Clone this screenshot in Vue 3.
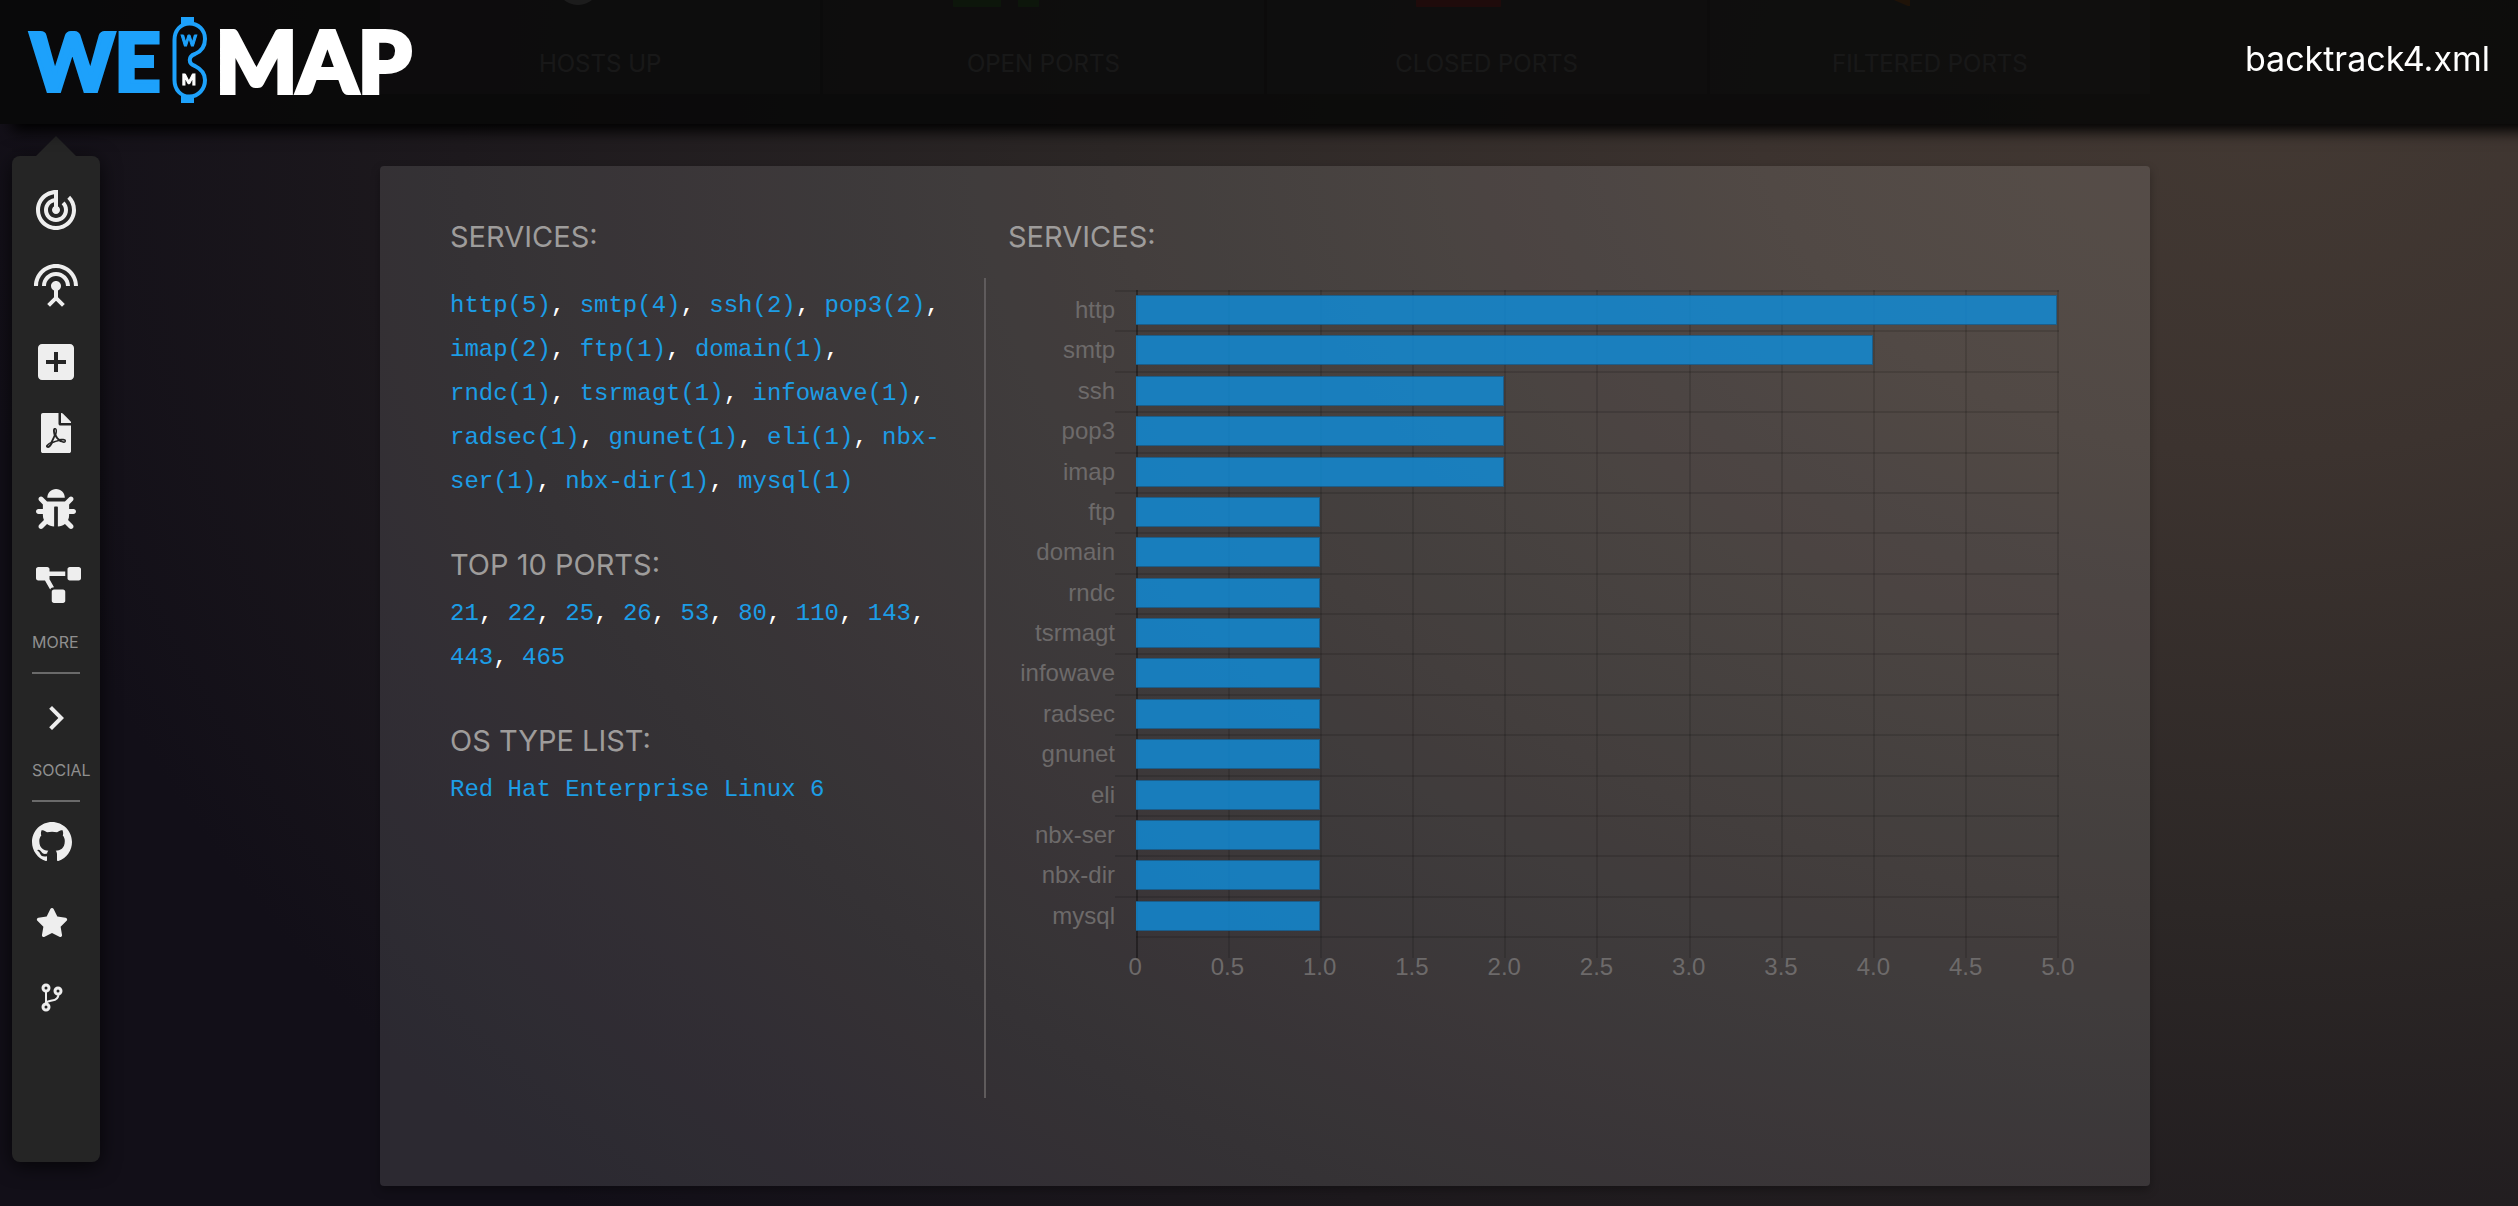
<script setup>
const tiles = [
  { label: 'HOSTS UP', kind: 'hosts' },
  { label: 'OPEN PORTS', kind: 'open' },
  { label: 'CLOSED PORTS', kind: 'closed' },
  { label: 'FILTERED PORTS', kind: 'filtered' },
]

const services = [
  { name: 'http', count: 5 },
  { name: 'smtp', count: 4 },
  { name: 'ssh', count: 2 },
  { name: 'pop3', count: 2 },
  { name: 'imap', count: 2 },
  { name: 'ftp', count: 1 },
  { name: 'domain', count: 1 },
  { name: 'rndc', count: 1 },
  { name: 'tsrmagt', count: 1 },
  { name: 'infowave', count: 1 },
  { name: 'radsec', count: 1 },
  { name: 'gnunet', count: 1 },
  { name: 'eli', count: 1 },
  { name: 'nbx-ser', count: 1 },
  { name: 'nbx-dir', count: 1 },
  { name: 'mysql', count: 1 },
]

const ports = [21, 22, 25, 26, 53, 80, 110, 143, 443, 465]

const axisMax = 5
const ticks = ['0', '0.5', '1.0', '1.5', '2.0', '2.5', '3.0', '3.5', '4.0', '4.5', '5.0']
</script>

<template>
  <div class="page">
    <header class="topbar">
      <a class="logo" href="#" aria-label="WebMap home">
        <span class="logo-we">WE</span>
        <svg class="logo-b" viewBox="0 0 36 86" width="36" height="86" aria-hidden="true">
          <rect x="9" y="0" width="13" height="8" fill="#1da1fb" />
          <rect x="9" y="78" width="13" height="8" fill="#1da1fb" />
          <path
            d="M2.5 23C2.5 13 9 6.500 17.500 6.500C26.500 6.500 33 13 33 22C33 29 29 34.500 23 37C16 39.500 16 46.500 23 49C29 52 33 57 33 63C33 72 26.500 79.500 17.500 79.500C9 79.500 2.500 73 2.500 63Z"
            fill="none" stroke="#1da1fb" stroke-width="4" />
          <text x="17" y="28.500" fill="#1da1fb" stroke="#1da1fb" class="logo-mini">W</text>
          <text x="17" y="68" fill="#fff" stroke="#fff" class="logo-mini">M</text>
        </svg>
        <span class="logo-map">MAP</span>
      </a>
      <span class="filename">backtrack4.xml</span>
    </header>

    <nav class="sidebar" aria-label="Main">
      <div class="group">
        <a href="#" aria-label="Scan">
          <svg viewBox="0 0 24 24" width="48" height="48"><path d="M19.07 4.93l-1.41 1.41C19.1 7.79 20 9.79 20 12c0 4.42-3.58 8-8 8s-8-3.58-8-8c0-4.08 3.05-7.44 7-7.93v2.02C8.16 6.57 6 9.03 6 12c0 3.31 2.69 6 6 6s6-2.69 6-6c0-1.66-.67-3.16-1.76-4.24l-1.41 1.41C15.55 9.9 16 10.900 16 12c0 2.210-1.790 4-4 4s-4-1.790-4-4c0-1.860 1.280-3.410 3-3.860v2.140c-.6.35-1 .98-1 1.720 0 1.100.9 2 2 2s2-.9 2-2c0-.74-.4-1.380-1-1.720V2h-1C6.480 2 2 6.480 2 12s4.480 10 10 10 10-4.480 10-10c0-2.760-1.120-5.260-2.930-7.070z" /></svg>
        </a>
        <a href="#" aria-label="Network">
          <svg viewBox="0 0 24 24" width="48" height="48"><path d="M12 5c-3.87 0-7 3.13-7 7h2c0-2.76 2.24-5 5-5s5 2.24 5 5h2c0-3.87-3.13-7-7-7zm1 9.29c.88-.39 1.5-1.26 1.5-2.29 0-1.38-1.12-2.5-2.5-2.5S9.5 10.62 9.5 12c0 1.02.62 1.9 1.5 2.29v3.3L7.59 21 9 22.41l3-3 3 3L16.41 21 13 17.59v-3.3zM12 1C5.93 1 1 5.93 1 12h2c0-4.97 4.03-9 9-9s9 4.03 9 9h2c0-6.07-4.93-11-11-11z" /></svg>
        </a>
        <a href="#" aria-label="New scan">
          <svg viewBox="0 0 24 24" width="48" height="48"><path d="M19 3H5c-1.11 0-2 .9-2 2v14c0 1.1.89 2 2 2h14c1.1 0 2-.9 2-2V5c0-1.1-.9-2-2-2zm-2 10h-4v4h-2v-4H7v-2h4V7h2v4h4v2z" /></svg>
        </a>
      </div>
      <div class="group group-tools">
        <a href="#" aria-label="PDF report">
          <svg viewBox="0 0 384 512" width="40" height="40"><path d="M181.9 256.1c-5-16-4.9-46.9-2-46.9 8.4 0 7.6 36.9 2 46.9zm-1.7 47.2c-7.7 20.2-17.3 43.3-28.4 62.7 18.3-7 39-17.2 62.9-21.9-12.7-9.6-24.9-23.4-34.5-40.8zM86.1 428.1c0 .8 13.2-5.4 34.9-40.2-6.7 6.3-29.1 24.5-34.9 40.2zM248 160h136v328c0 13.3-10.7 24-24 24H24c-13.3 0-24-10.7-24-24V24C0 10.7 10.7 0 24 0h200v136c0 13.2 10.8 24 24 24zm-8 171.8c-20-12.2-33.3-29-42.7-53.8 4.5-18.5 11.6-46.6 6.2-64.2-4.7-29.4-42.4-26.5-47.8-6.8-5 18.3-.4 44.1 8.1 77-11.6 27.6-28.7 64.6-40.8 85.8-.1 0-.1.1-.2.1-27.1 13.9-73.6 44.5-54.5 68 5.6 6.9 16 10 21.5 10 17.9 0 35.7-18 61.1-61.8 25.8-8.5 54.1-19.1 79-23.2 21.7 11.8 47.1 19.5 64 19.5 29.2 0 31.2-32 19.7-43.4-13.9-13.6-54.3-9.7-73.6-7.2zM377 105L279 7c-4.5-4.5-10.6-7-17-7h-6v128h128v-6.1c0-6.3-2.5-12.4-7-16.900zm-74.100 255.300c4.100-2.700-2.500-11.900-42.800-9 37.100 15.800 42.800 9 42.800 9z" /></svg>
        </a>
        <a href="#" aria-label="CVE check">
          <svg viewBox="0 0 512 512" width="40" height="40"><path d="M511.988 288.9c-.478 17.43-15.217 31.1-32.653 31.1H424v16c0 21.864-4.882 42.584-13.6 61.145l60.228 60.228c12.496 12.497 12.496 32.758 0 45.255-12.498 12.497-32.759 12.496-45.256 0l-54.736-54.736C345.886 467.965 314.351 480 280 480V236c0-6.627-5.373-12-12-12h-24c-6.627 0-12 5.373-12 12v244c-34.351 0-65.886-12.035-90.636-32.108l-54.736 54.736c-12.498 12.497-32.759 12.496-45.256 0-12.496-12.497-12.496-32.758 0-45.255l60.228-60.228C92.882 378.584 88 357.864 88 336v-16H32.666C15.230 320 .491 306.330.013 288.900-.484 270.816 14.028 256 32 256h56v-58.745l-46.628-46.628c-12.496-12.497-12.496-32.758 0-45.255 12.498-12.497 32.758-12.497 45.256 0L141.255 160h229.489l54.627-54.627c12.498-12.497 32.758-12.497 45.256 0 12.496 12.497 12.496 32.758 0 45.255L424 197.255V256h56c17.972 0 32.484 14.816 31.988 32.900zM257 0c-61.856 0-112 50.144-112 112h224C369 50.144 318.856 0 257 0z" /></svg>
        </a>
        <a href="#" aria-label="Network diagram">
          <svg viewBox="0 0 640 512" width="45" height="40"><path d="M384 320H256c-17.670 0-32 14.330-32 32v128c0 17.670 14.330 32 32 32h128c17.670 0 32-14.330 32-32V352c0-17.670-14.330-32-32-32zM192 32c0-17.670-14.330-32-32-32H32C14.330 0 0 14.330 0 32v128c0 17.670 14.330 32 32 32h95.720l73.160 128.040C211.980 300.980 232.400 288 256 288h.28L192 175.510V128h224V64H192V32zM608 0H480c-17.670 0-32 14.330-32 32v128c0 17.670 14.330 32 32 32h128c17.670 0 32-14.330 32-32V32c0-17.670-14.330-32-32-32z" /></svg>
        </a>
      </div>
      <p class="caption">MORE</p>
      <a class="more-link" href="#" aria-label="Expand">
        <svg viewBox="0 0 24 24" width="48" height="48"><path d="M10 6L8.590 7.410 13.170 12l-4.580 4.590L10 18l6-6z" /></svg>
      </a>
      <p class="caption">SOCIAL</p>
      <div class="group group-social">
        <a href="#" aria-label="GitHub">
          <svg viewBox="0 0 16 16" width="40" height="40"><path d="M8 0C3.58 0 0 3.58 0 8c0 3.54 2.29 6.53 5.47 7.59.4.07.55-.17.55-.38 0-.19-.01-.82-.01-1.49-2.01.37-2.53-.49-2.69-.94-.09-.23-.48-.94-.82-1.13-.28-.15-.68-.52-.01-.53.63-.01 1.08.58 1.23.82.72 1.21 1.87.87 2.33.66.07-.52.28-.87.51-1.07-1.78-.2-3.64-.89-3.64-3.95 0-.87.31-1.59.82-2.15-.08-.2-.36-1.02.08-2.12 0 0 .67-.21 2.2.82.64-.18 1.32-.27 2-.27s1.36.09 2 .27c1.53-1.04 2.2-.82 2.2-.82.44 1.1.16 1.92.08 2.12.51.56.82 1.27.82 2.15 0 3.07-1.87 3.75-3.65 3.95.29.25.54.73.54 1.48 0 1.07-.01 1.93-.01 2.2 0 .21.15.46.55.38A8.01 8.01 0 0 0 16 8c0-4.42-3.58-8-8-8z" /></svg>
        </a>
        <a href="#" aria-label="Star the project">
          <svg viewBox="0 0 576 512" width="40" height="29"><path d="M259.3 17.800L194 150.200 47.900 171.500c-26.200 3.800-36.700 36.100-17.700 54.600l105.700 103-25 145.500c-4.500 26.300 23.200 46 46.400 33.700L288 439.600l130.700 68.700c23.200 12.200 50.900-7.400 46.400-33.700l-25-145.500 105.700-103c19-18.500 8.500-50.800-17.700-54.600L382 150.200 316.700 17.800c-11.700-23.600-45.600-23.900-57.400 0z" /></svg>
        </a>
        <a href="#" aria-label="Fork the project">
          <svg viewBox="0 0 40 29" width="40" height="29">
            <g fill="none" stroke="#eee">
              <circle cx="14" cy="5" r="3" stroke-width="3" />
              <circle cx="26" cy="8" r="3" stroke-width="3" />
              <circle cx="14" cy="24" r="3" stroke-width="3" />
              <path d="M14 8V21M26.500 11C26.500 15 25 17 20 17.500C17 18 15 18 14 20" stroke-width="2" />
            </g>
          </svg>
        </a>
      </div>
    </nav>

    <main class="content">
      <section class="tiles" aria-label="Summary">
        <div v-for="tile in tiles" :key="tile.kind" class="tile">
          <svg viewBox="-100 0 200 8" width="200" height="8" aria-hidden="true">
            <circle v-if="tile.kind === 'hosts'" cx="-22" cy="-17" r="22" fill="#ddd" />
            <g v-else-if="tile.kind === 'open'" fill="#3a9a2a">
              <rect x="-90" y="-4" width="48" height="11" rx="1" />
              <rect x="-25" y="-4" width="21" height="11" rx="1" />
            </g>
            <rect v-else-if="tile.kind === 'closed'" x="-71" y="-4" width="85" height="11" rx="1" fill="#ff2a2a" />
            <path v-else d="M-36 0H-20V6H-22Z" fill="#ff7a00" />
          </svg>
          <span class="tile-label">{{ tile.label }}</span>
        </div>
      </section>

      <section class="card">
        <div class="lists">
          <h2>SERVICES:</h2>
          <p class="list list-services">
            <template v-for="(s, i) in services" :key="s.name"><a href="#">{{ s.name }}({{ s.count }})</a><template v-if="i < services.length - 1">, </template></template>
          </p>
          <h2>TOP 10 PORTS:</h2>
          <p class="list">
            <template v-for="(p, i) in ports" :key="p"><a href="#">{{ p }}</a><template v-if="i < ports.length - 1">, </template></template>
          </p>
          <h2>OS TYPE LIST:</h2>
          <p class="list"><a href="#">Red Hat Enterprise Linux 6</a></p>
        </div>

        <div class="chart-col">
          <h2>SERVICES:</h2>
          <div class="chart-box">
            <div class="chart">
              <div class="grid" aria-hidden="true">
                <span v-for="n in 10" :key="n" class="grid-cell"></span>
              </div>
              <div v-for="s in services" :key="s.name" class="row">
                <span class="row-label">{{ s.name }}</span>
                <div class="track">
                  <div class="bar" :style="{ width: (s.count / axisMax) * 100 + '%' }"></div>
                </div>
              </div>
            </div>
            <div class="axis">
              <span v-for="t in ticks" :key="t">{{ t }}</span>
            </div>
          </div>
        </div>
      </section>
    </main>
  </div>
</template>

<style>
body {
  margin: 0;
  background: #120f18;
}
</style>

<style scoped>
.page {
  display: flex;
  align-items: flex-start;
  box-sizing: border-box;
  min-height: 100vh;
  overflow: hidden;
  font-family: Inter, "Liberation Sans", sans-serif;
  background: radial-gradient(ellipse 92% 135% at 90% 8%, #433933 0%, #3c332f 22%, #2c2726 50%, #1d191d 78%, #120f18 100%);
}

a {
  color: inherit;
  text-decoration: none;
}

.topbar {
  position: fixed;
  z-index: 2;
  top: 0;
  left: 0;
  right: 0;
  display: flex;
  align-items: flex-start;
  justify-content: space-between;
  box-sizing: border-box;
  height: 124px;
  padding: 0 28px 0 30px;
  background: rgba(9, 9, 9, 0.91);
  box-shadow: 14px 5px 14px 2px #000;
}

.logo {
  display: flex;
  align-items: center;
  height: 120px;
  font-family: Lato, sans-serif;
  font-weight: 900;
  line-height: 120px;
}

.logo-we {
  color: #1da1fb;
  font-size: 80px;
  -webkit-text-stroke: 4px #1da1fb;
}

.logo-b {
  margin: 0 8px 0 11px;
}

.logo-map {
  color: #fff;
  font-size: 86px;
  -webkit-text-stroke: 4px #fff;
}

.logo-mini {
  font-family: Lato, sans-serif;
  font-size: 15px;
  font-weight: 900;
  text-anchor: middle;
}

.filename {
  color: #fff;
  font-size: 34px;
  line-height: 118px;
}

.sidebar {
  flex: none;
  box-sizing: border-box;
  position: relative;
  width: 88px;
  margin: 156px 0 0 12px;
  padding: 30px 0 150px 20px;
  border-radius: 8px;
  background: #252525;
  box-shadow: 0 4px 20px rgba(0, 0, 0, 0.7);
  fill: #eee;
}

.sidebar::before {
  content: "";
  position: absolute;
  top: -20px;
  left: 24px;
  border: 20px solid transparent;
  border-top: 0;
  border-bottom-color: #252525;
}

.group {
  display: flex;
  flex-direction: column;
  align-items: flex-start;
  gap: 28px;
}

.group a,
.more-link {
  display: flex;
}

.group-tools {
  gap: 36px;
  padding: 27px 0 27px 4px;
}

.group-social {
  gap: 46px;
}

.caption {
  margin: 0;
  color: #8f8f8f;
  font-size: 16px;
  line-height: 20px;
}

.caption::after {
  content: "";
  display: block;
  width: 48px;
  height: 2px;
  margin: 20px 0;
  background: #6a6a6a;
}

.more-link {
  padding-bottom: 18px;
}

.content {
  flex: 1;
  min-width: 0;
  margin: 0 368px 20px 280px;
}

.tiles {
  display: flex;
  gap: 3px;
}

.tile {
  flex: 1;
  display: flex;
  flex-direction: column;
  align-items: center;
  height: 94px;
  background: rgba(255, 255, 255, 0.12);
}

.tile-label {
  margin-top: 40px;
  color: #b4b4b4;
  font-size: 24px;
  line-height: 32px;
}

.card {
  display: grid;
  grid-template-columns: 534fr 1075fr;
  margin-top: 72px;
  padding: 49px 91px 88px 70px;
  border-radius: 4px;
  background: rgba(255, 255, 255, 0.11);
  box-shadow: 0 4px 10px rgba(0, 0, 0, 0.3);
}

h2 {
  margin: 0;
  color: #9e9c9b;
  font-size: 29px;
  font-weight: 400;
  line-height: 44px;
}

.lists {
  padding-right: 24px;
}

.list {
  margin: 5px 0 39px;
  color: #fff;
  font-family: "Liberation Mono", monospace;
  font-size: 24px;
  line-height: 44px;
}

.list-services {
  margin-top: 25px;
}

.list a {
  color: #1c9de6;
}

.chart-col h2 {
  padding-left: 24px;
}

.chart-box {
  box-sizing: border-box;
  min-height: 820px;
  margin-top: 19px;
  padding-top: 12px;
  border-left: 2px solid #5f5b5c;
  font-family: "Liberation Sans", sans-serif;
  font-size: 24px;
  color: #6d6a6a;
}

.chart {
  position: relative;
  display: flex;
  flex-direction: column;
  height: 646px;
}

.grid {
  position: absolute;
  top: 0;
  bottom: -22px;
  left: 150px;
  right: 0;
  display: flex;
  border-right: 2px solid rgba(0, 0, 0, 0.12);
}

.grid-cell {
  flex: 1;
  border-left: 2px solid rgba(0, 0, 0, 0.12);
}

.grid-cell:first-child {
  border-left-color: rgba(0, 0, 0, 0.35);
}

.grid::after {
  content: "";
  position: absolute;
  left: 0;
  right: 0;
  bottom: 20px;
  height: 2px;
  background: rgba(0, 0, 0, 0.12);
}

.row {
  flex: 1;
  display: flex;
  position: relative;
}

.row-label {
  width: 129px;
  line-height: 40px;
  text-align: right;
}

.track {
  flex: 1;
  padding: 3px 2px 0 21px;
  border-top: 2px solid rgba(0, 0, 0, 0.12);
}

.bar {
  box-sizing: border-box;
  height: 30px;
  border: solid rgba(30, 60, 85, 0.5);
  border-width: 1px 1px 1px 0;
  background: rgba(16, 140, 217, 0.82);
}

.axis {
  display: grid;
  grid-template-columns: repeat(11, 1fr);
  margin: 17px -45px 0 103px;
  line-height: 28px;
  text-align: center;
}
</style>
